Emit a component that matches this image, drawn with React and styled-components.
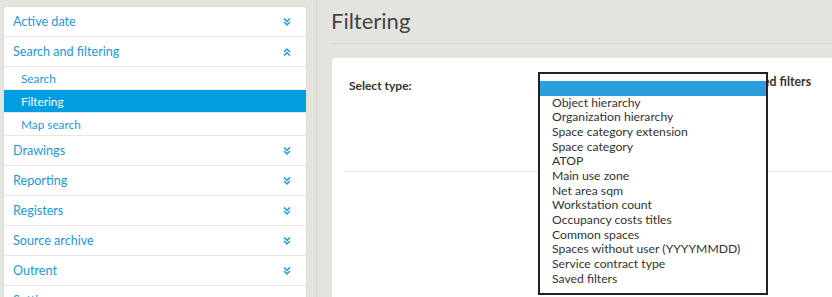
import React from 'react';
import styled, { createGlobalStyle } from 'styled-components';

const GlobalStyle = createGlobalStyle`
  html, body {
    margin: 0;
    padding: 0;
    height: 100%;
    overflow: hidden;
    background: #e4e4df;
    font-family: Lato, "Open Sans", "Liberation Sans", sans-serif;
  }
`;

const Page = styled.div`
  display: flex;
  height: 297px;
  overflow: hidden;
`;

const SideColumn = styled.div`
  flex: 0 0 auto;
  padding: 6px 9px 0 3px;
  border-right: 1px solid #d5d5cf;
`;

const SidePanel = styled.nav`
  width: 302px;
  background: #fff;
  border: 1px solid #dcdcd8;
  border-bottom: none;
  border-radius: 3px 3px 0 0;
`;

const SectionHeader = styled.div`
  display: flex;
  align-items: center;
  justify-content: space-between;
  height: 29px;
  padding: 0 15px 0 9px;
  border-bottom: 1px solid #e6e6e3;
  color: #1f97d4;
  font-size: 12.6px;
`;

const SubItem = styled.div`
  display: flex;
  align-items: center;
  height: 22px;
  padding-left: 17px;
  border-bottom: 1px solid #e6e6e3;
  font-size: 11.8px;
  color: ${(p) => (p.$active ? '#fff' : '#1f97d4')};
  background: ${(p) => (p.$active ? '#009de0' : '#fff')};
`;

const Main = styled.main`
  flex: 1;
  min-width: 0;
  padding-left: 14px;
`;

const Title = styled.h1`
  margin: 0;
  padding: 7px 0 0;
  height: 36px;
  font-size: 22px;
  font-weight: 400;
  color: #444;
  border-bottom: 1px solid #d7d7d2;
`;

const Card = styled.section`
  margin-top: 14px;
  margin-left: 1px;
  width: 560px;
  background: #fff;
  border-radius: 4px;
  padding: 0 0 0 12px;
  height: 260px;
`;

const FieldRow = styled.div`
  display: flex;
  align-items: flex-start;
  height: 113px;
  border-bottom: 1px solid #e6e6e3;
`;

const FieldLabel = styled.div`
  width: 189px;
  padding: 20px 0 0 5px;
  font-size: 12px;
  font-weight: 700;
  color: #333;
`;

const FieldArea = styled.div`
  position: relative;
  flex: 1;
  padding: 16px 0 0 206px;
`;

const SideLabel = styled.div`
  font-size: 12.3px;
  font-weight: 700;
  color: #333;
`;

const Listbox = styled.ul`
  position: absolute;
  top: 14px;
  left: 0;
  width: 226px;
  height: 212px;
  margin: 0;
  padding: 7px 0 0;
  list-style: none;
  background: #fff;
  border: 2px solid #222;
  z-index: 2;
`;

const Option = styled.li`
  height: 14.67px;
  line-height: 14.67px;
  padding-left: 12px;
  font-size: 12.2px;
  color: #333;
  white-space: nowrap;
  background: ${(p) => (p.$selected ? '#2a9fdb' : 'transparent')};
`;

const Chevrons = ({ up }) => (
  <svg width="8" height="8" viewBox="0 0 8 8" fill="none" stroke="#2a9fdb" strokeWidth="1.6">
    {up ? (
      <>
        <path d="M1 4 L4 1.2 L7 4" />
        <path d="M1 7.5 L4 4.7 L7 7.5" />
      </>
    ) : (
      <>
        <path d="M1 0.5 L4 3.3 L7 0.5" />
        <path d="M1 4 L4 6.8 L7 4" />
      </>
    )}
  </svg>
);

const options = [
  'Object hierarchy',
  'Organization hierarchy',
  'Space category extension',
  'Space category',
  'ATOP',
  'Main use zone',
  'Net area sqm',
  'Workstation count',
  'Occupancy costs titles',
  'Common spaces',
  'Spaces without user (YYYYMMDD)',
  'Service contract type',
  'Saved filters',
];

const sections = ['Drawings', 'Reporting', 'Registers', 'Source archive', 'Outrent', 'Settings'];

export default function App() {
  return (
    <>
      <GlobalStyle />
      <Page>
        <SideColumn>
          <SidePanel>
            <SectionHeader>
              Active date <Chevrons />
            </SectionHeader>
            <SectionHeader>
              Search and filtering <Chevrons up />
            </SectionHeader>
            <SubItem>Search</SubItem>
            <SubItem $active>Filtering</SubItem>
            <SubItem>Map search</SubItem>
            {sections.map((s) => (
              <SectionHeader key={s}>
                {s} <Chevrons />
              </SectionHeader>
            ))}
          </SidePanel>
        </SideColumn>
        <Main>
          <Title>Filtering</Title>
          <Card>
            <FieldRow>
              <FieldLabel>Select type:</FieldLabel>
              <FieldArea>
                <SideLabel>Saved filters</SideLabel>
                <Listbox>
                  <Option $selected>&nbsp;</Option>
                  {options.map((o) => (
                    <Option key={o}>{o}</Option>
                  ))}
                </Listbox>
              </FieldArea>
            </FieldRow>
          </Card>
        </Main>
      </Page>
    </>
  );
}
